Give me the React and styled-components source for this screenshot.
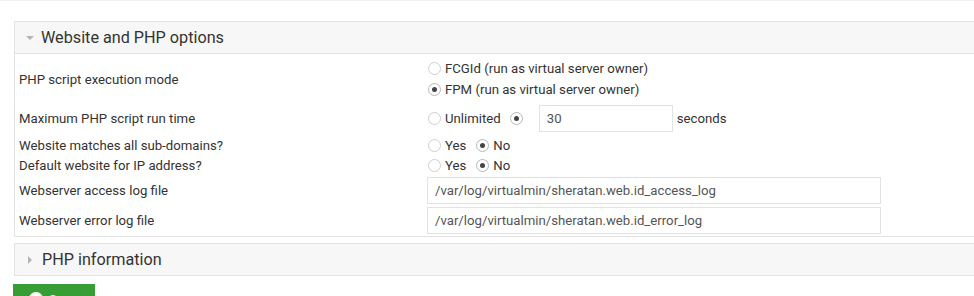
import React from 'react';
import styled, { createGlobalStyle } from 'styled-components';

const Global = createGlobalStyle`
  html, body {
    margin: 0;
    padding: 0;
    background: #fff;
    overflow: hidden;
  }
  body {
    font-family: Roboto, "Liberation Sans", Arial, sans-serif;
    font-size: 13.2px;
    color: #333;
  }
`;

const Page = styled.div`
  width: 974px;
  height: 296px;
  overflow: hidden;
  border-top: 1px solid #f0f0f0;
  box-sizing: border-box;
  padding: 20px 0 0 14px;
`;

const Panel = styled.div`
  width: 980px;
  border: 1px solid #e3e3e3;
  border-right: none;
  background: #fff;
  margin-bottom: ${(p) => p.$gap || 0}px;
`;

const PanelHeader = styled.div`
  height: 31px;
  display: flex;
  align-items: center;
  background: #f7f7f7;
  border-bottom: ${(p) => (p.$open ? '1px solid #e3e3e3' : 'none')};
  padding-left: 11px;
  font-size: 16.2px;
  color: #333;
`;

const Caret = styled.span`
  display: inline-block;
  width: 0;
  height: 0;
  margin-right: ${(p) => (p.$open ? 7 : 10)}px;
  ${(p) =>
    p.$open
      ? `border-left: 4px solid transparent;
         border-right: 4px solid transparent;
         border-top: 4px solid #b5b5b5;`
      : `border-top: 4px solid transparent;
         border-bottom: 4px solid transparent;
         border-left: 4px solid #b5b5b5;
         margin-left: 2px;`}
`;

const PanelBody = styled.div`
  padding: 3px 0 1px 0;
`;

const Row = styled.div`
  display: flex;
  align-items: center;
  height: ${(p) => p.$h}px;
`;

const Label = styled.div`
  width: 412px;
  padding-left: 4px;
  box-sizing: border-box;
  flex-shrink: 0;
`;

const Value = styled.div`
  display: flex;
  flex-direction: ${(p) => (p.$stack ? 'column' : 'row')};
  align-items: ${(p) => (p.$stack ? 'flex-start' : 'center')};
`;

const Choice = styled.label`
  display: inline-flex;
  align-items: center;
  height: ${(p) => (p.$tall ? 21 : 20)}px;
  margin-right: ${(p) => p.$mr || 0}px;
  color: #333;
`;

const Dot = styled.span`
  width: 13px;
  height: 13px;
  border-radius: 50%;
  border: 1px solid ${(p) => (p.$on ? '#b8b8b8' : '#cfcfcf')};
  background: #fff;
  margin: 0 4px 0 1px;
  display: inline-flex;
  align-items: center;
  justify-content: center;
  box-sizing: border-box;
  flex-shrink: 0;

  &::after {
    content: '';
    display: ${(p) => (p.$on ? 'block' : 'none')};
    width: 5px;
    height: 5px;
    border-radius: 50%;
    background: #444;
  }
`;

const Field = styled.div`
  width: ${(p) => p.$w}px;
  height: 27px;
  border: 1px solid #e2e2e2;
  box-sizing: border-box;
  display: flex;
  align-items: center;
  padding-left: 7px;
  color: #555;
  background: #fff;
`;

const Unit = styled.span`
  margin-left: 4px;
`;

const Footer = styled.div`
  padding-top: 8px;
  margin-left: -1px;
`;

const SaveButton = styled.button`
  width: 82px;
  height: 34px;
  border: none;
  background: #369e35;
  color: #fff;
  font-family: Roboto, "Liberation Sans", Arial, sans-serif;
  font-size: 13px;
  display: flex;
  align-items: flex-start;
  padding: 8px 0 0 16px;
  gap: 6px;
  line-height: 15px;
`;

const Radio = ({ on, children, mr, tall }) => (
  <Choice $mr={mr} $tall={tall}>
    <Dot $on={on} />
    {children}
  </Choice>
);

const YesNo = ({ yes }) => (
  <Value>
    <Radio on={yes} mr={9}>Yes</Radio>
    <Radio on={!yes}>No</Radio>
  </Value>
);

const App = () => (
  <>
    <Global />
    <Page>
      <Panel $gap={6}>
        <PanelHeader $open>
          <Caret $open />
          Website and PHP options
        </PanelHeader>
        <PanelBody>
          <Row $h={44}>
            <Label>PHP script execution mode</Label>
            <Value $stack>
              <Radio tall>FCGId (run as virtual server owner)</Radio>
              <Radio tall on>FPM (run as virtual server owner)</Radio>
            </Value>
          </Row>
          <Row $h={35}>
            <Label>Maximum PHP script run time</Label>
            <Value>
              <Radio mr={8}>Unlimited</Radio>
              <Radio on mr={12} />
              <Field $w={134}>30</Field>
              <Unit>seconds</Unit>
            </Value>
          </Row>
          <Row $h={19}>
            <Label>Website matches all sub-domains?</Label>
            <YesNo />
          </Row>
          <Row $h={20}>
            <Label>Default website for IP address?</Label>
            <YesNo />
          </Row>
          <Row $h={30}>
            <Label>Webserver access log file</Label>
            <Field $w={454}>/var/log/virtualmin/sheratan.web.id_access_log</Field>
          </Row>
          <Row $h={30}>
            <Label>Webserver error log file</Label>
            <Field $w={454}>/var/log/virtualmin/sheratan.web.id_error_log</Field>
          </Row>
        </PanelBody>
      </Panel>
      <Panel>
        <PanelHeader>
          <Caret />
          PHP information
        </PanelHeader>
      </Panel>
      <Footer>
        <SaveButton>
          <svg width="14" height="14" viewBox="0 0 14 14">
            <circle cx="7" cy="7" r="7" fill="#fff" />
            <path d="M4 7.2l2 2 4-4" stroke="#369e35" strokeWidth="1.6" fill="none" />
          </svg>
          Save
        </SaveButton>
      </Footer>
    </Page>
  </>
);

export default App;
